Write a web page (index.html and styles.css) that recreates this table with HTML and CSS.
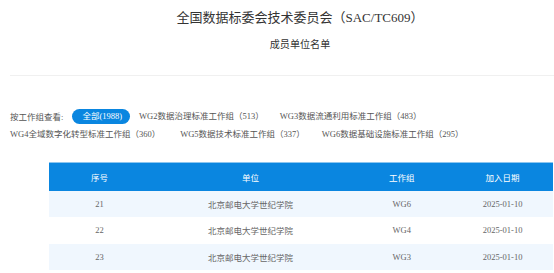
FILE: index.html
```html
<!DOCTYPE html>
<html lang="zh-CN">
<head>
<meta charset="utf-8">
<title>成员单位名单</title>
<link rel="stylesheet" href="styles.css">
</head>
<body>
<div class="page">
  <h1 class="title">全国数据标委会技术委员会（SAC/TC609）</h1>
  <h2 class="subtitle">成员单位名单</h2>
  <div class="sep"></div>
  <div class="filter">
    <div class="frow">
      <span class="flabel">按工作组查看:</span>
      <a class="fitem active">全部(1988)</a>
      <a class="fitem">WG2数据治理标准工作组（513）</a>
      <a class="fitem">WG3数据流通利用标准工作组（483）</a>
    </div>
    <div class="frow">
      <a class="fitem lead">WG4全域数字化转型标准工作组（360）</a>
      <a class="fitem wide">WG5数据技术标准工作组（337）</a>
      <a class="fitem">WG6数据基础设施标准工作组（295）</a>
    </div>
  </div>
  <table class="list">
    <colgroup>
      <col class="c1"><col class="c2"><col class="c3"><col class="c4">
    </colgroup>
    <thead>
      <tr><th>序号</th><th>单位</th><th>工作组</th><th>加入日期</th></tr>
    </thead>
    <tbody>
      <tr><td>21</td><td>北京邮电大学世纪学院</td><td>WG6</td><td>2025-01-10</td></tr>
      <tr><td>22</td><td>北京邮电大学世纪学院</td><td>WG4</td><td>2025-01-10</td></tr>
      <tr><td>23</td><td>北京邮电大学世纪学院</td><td>WG3</td><td>2025-01-10</td></tr>
    </tbody>
  </table>
</div>
</body>
</html>
```
FILE: styles.css
```css
html, body {
  margin: 0;
  padding: 0;
  overflow: hidden;
  background: #fff;
}
body {
  font-family: "Liberation Serif", "Noto Sans CJK SC", serif;
  color: #333;
}
.page {
  width: 580px;
  margin-left: 10px;
}
.title {
  margin: 0;
  padding-top: 8px;
  font-size: 13px;
  line-height: 20px;
  font-weight: normal;
  text-align: center;
  color: #333;
}
.subtitle {
  margin: 9px 0 0;
  font-size: 10.1px;
  line-height: 16px;
  font-weight: normal;
  text-align: center;
  color: #333;
}
.sep {
  margin-top: 22px;
  height: 1px;
  background: #f0f0f0;
  width: 600px;
}
.filter {
  margin-top: 31px;
  font-size: 8.5px;
  color: #555;
}
.frow {
  display: flex;
  align-items: center;
  height: 18px;
  white-space: nowrap;
}
.flabel {
  margin-right: 9px;
}
.fitem {
  display: inline-block;
  line-height: 15px;
  color: #555;
  margin-right: 16px;
}
.fitem.active {
  background: #0a86e0;
  color: #fff;
  border-radius: 8px;
  padding: 0 8px 0 10px;
  margin-right: 9px;
}
.fitem.wide {
  margin-right: 17px;
}
.fitem.lead {
  margin-right: 20px;
}
.list {
  margin: 19px 0 0 39px;
  width: 504px;
  border-collapse: collapse;
  table-layout: fixed;
  font-size: 8.5px;
}
.c1 { width: 20%; }
.c2 { width: 40%; }
.c3 { width: 20%; }
.c4 { width: 20%; }
.list th {
  background: #0a86e0;
  color: #fff;
  font-weight: normal;
  height: 28px;
  padding: 0;
  text-align: center;
  border-top: 1px solid #8cc6f0;
  box-sizing: border-box;
}
.list td {
  height: 26.67px;
  padding: 0;
  text-align: center;
  color: #666;
}
.list tbody tr:nth-child(odd) td {
  background: #f0f7fe;
}
```
